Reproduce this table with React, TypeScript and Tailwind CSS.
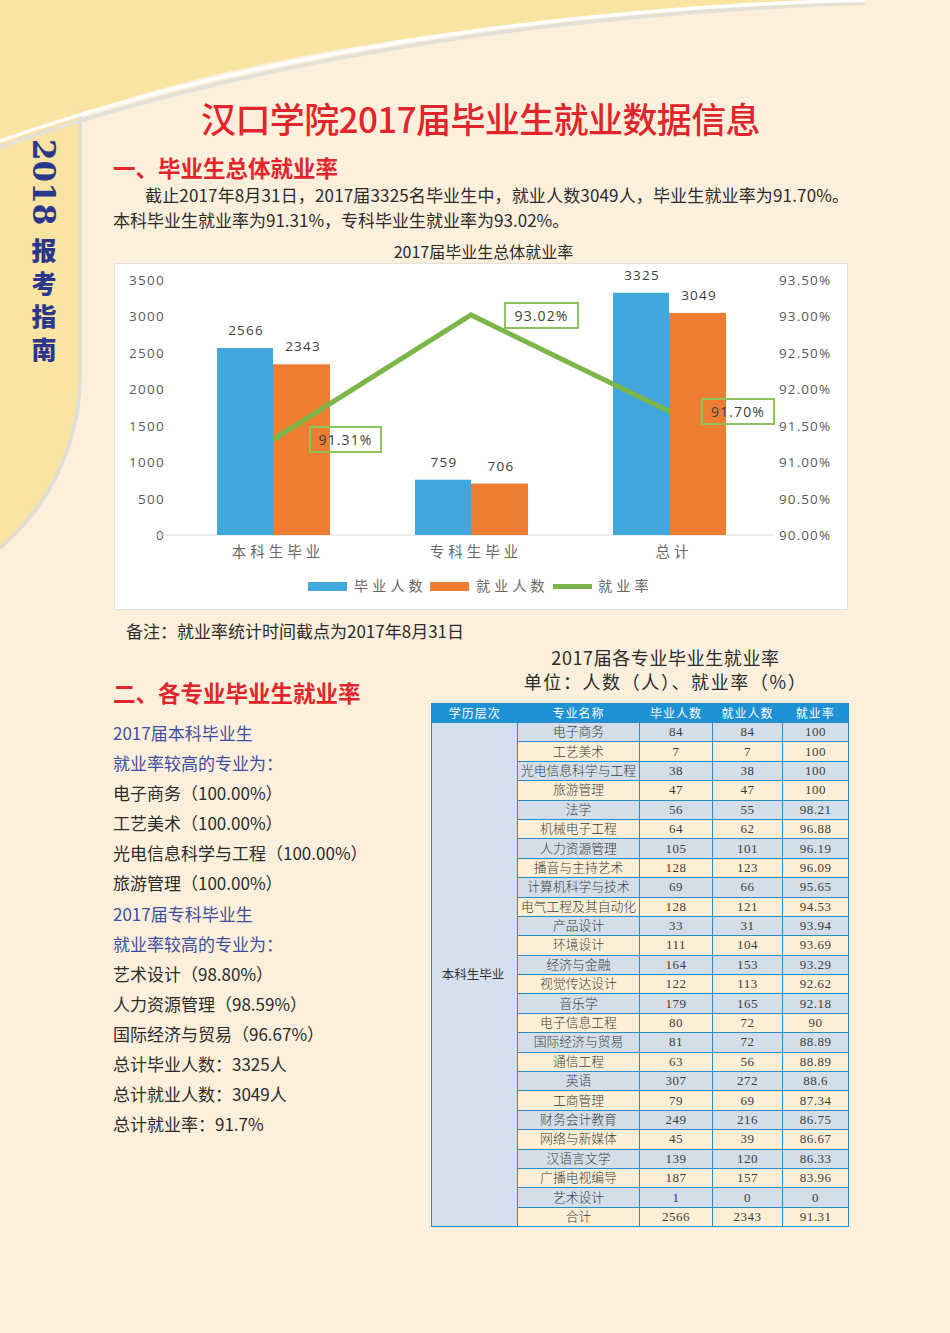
import React from 'react';

// 26 rows: 25 majors + total
const ROWS: [string, string, string, string][] = [
  ['电子商务', '84', '84', '100'],
  ['工艺美术', '7', '7', '100'],
  ['光电信息科学与工程', '38', '38', '100'],
  ['旅游管理', '47', '47', '100'],
  ['法学', '56', '55', '98.21'],
  ['机械电子工程', '64', '62', '96.88'],
  ['人力资源管理', '105', '101', '96.19'],
  ['播音与主持艺术', '128', '123', '96.09'],
  ['计算机科学与技术', '69', '66', '95.65'],
  ['电气工程及其自动化', '128', '121', '94.53'],
  ['产品设计', '33', '31', '93.94'],
  ['环境设计', '111', '104', '93.69'],
  ['经济与金融', '164', '153', '93.29'],
  ['视觉传达设计', '122', '113', '92.62'],
  ['音乐学', '179', '165', '92.18'],
  ['电子信息工程', '80', '72', '90'],
  ['国际经济与贸易', '81', '72', '88.89'],
  ['通信工程', '63', '56', '88.89'],
  ['英语', '307', '272', '88.6'],
  ['工商管理', '79', '69', '87.34'],
  ['财务会计教育', '249', '216', '86.75'],
  ['网络与新媒体', '45', '39', '86.67'],
  ['汉语言文学', '139', '120', '86.33'],
  ['广播电视编导', '187', '157', '83.96'],
  ['艺术设计', '1', '0', '0'],
  ['合计', '2566', '2343', '91.31'],
];

const LIST: { text: string; blue?: boolean }[] = [
  { text: '2017届本科毕业生', blue: true },
  { text: '就业率较高的专业为：', blue: true },
  { text: '电子商务（100.00%）' },
  { text: '工艺美术（100.00%）' },
  { text: '光电信息科学与工程（100.00%）' },
  { text: '旅游管理（100.00%）' },
  { text: '2017届专科毕业生', blue: true },
  { text: '就业率较高的专业为：', blue: true },
  { text: '艺术设计（98.80%）' },
  { text: '人力资源管理（98.59%）' },
  { text: '国际经济与贸易（96.67%）' },
  { text: '总计毕业人数：3325人' },
  { text: '总计就业人数：3049人' },
  { text: '总计就业率：91.7%' },
];

const GROUPS = [
  { label: '本科生毕业', grad: 2566, emp: 2343, rate: 91.31, x: 103, box: [196, 164, 71] },
  { label: '专科生毕业', grad: 759, emp: 706, rate: 93.02, x: 301, box: [391, 40, 73] },
  { label: '总计', grad: 3325, emp: 3049, rate: 91.7, x: 499, box: [588, 136, 72] },
];

const LEFT_TICKS = ['3500', '3000', '2500', '2000', '1500', '1000', '500', '0'];
const RIGHT_TICKS = ['93.50%', '93.00%', '92.50%', '92.00%', '91.50%', '91.00%', '90.50%', '90.00%'];

const CHART_FONT = "'Open Sans','Noto Sans CJK SC',sans-serif";

function Chart() {
  const y = (v: number) => 272 - (v * 255) / 3500;
  const yr = (r: number) => 272 - ((r - 90) * 255) / 3.5;
  const pts = GROUPS.map((g) => `${g.x + 56},${yr(g.rate)}`).join(' ');

  return (
    <div className="ml-[1px] w-[734px] h-[347px] bg-white border border-[#e4e1dc]">
      <svg width="732" height="345" viewBox="1 1 732 345" fontFamily={CHART_FONT}>
        {LEFT_TICKS.map((t, i) => (
          <text key={t} x={51} y={17 + i * 36.43 + 5} textAnchor="end" fontSize="13.5" letterSpacing="1.3" fill="#595959">
            {t}
          </text>
        ))}
        {RIGHT_TICKS.map((t, i) => (
          <text key={t} x={665} y={17 + i * 36.43 + 5} fontSize="13.5" letterSpacing="1.1" fill="#595959">
            {t}
          </text>
        ))}
        <line x1={43} y1={272} x2={659} y2={272} stroke="#d9d9d9" strokeWidth="1.2" />

        {GROUPS.map((g) => (
          <g key={g.label}>
            <rect x={g.x} y={y(g.grad)} width={56} height={272 - y(g.grad)} fill="#41a7dc" />
            <rect x={g.x + 56} y={y(g.emp)} width={57} height={272 - y(g.emp)} fill="#ed7d31" />
            <text x={g.x + 29} y={y(g.grad) - 13} textAnchor="middle" fontSize="13.5" letterSpacing="1.2" fill="#404040">
              {g.grad}
            </text>
            <text x={g.x + 86} y={y(g.emp) - 13} textAnchor="middle" fontSize="13.5" letterSpacing="1.2" fill="#404040">
              {g.emp}
            </text>
            <text x={g.x + 61} y={294} textAnchor="middle" fontSize="14.5" letterSpacing="4" fill="#666666">
              {g.label}
            </text>
          </g>
        ))}

        <polyline points={pts} fill="none" stroke="#7cb648" strokeWidth="5" strokeLinejoin="miter" />

        {GROUPS.map((g) => (
          <g key={`r-${g.label}`}>
            <rect x={g.box[0]} y={g.box[1]} width={g.box[2]} height={25} fill="none" stroke="#8cc45a" strokeWidth="2" />
            <text
              x={g.box[0] + g.box[2] / 2}
              y={g.box[1] + 18}
              textAnchor="middle"
              fontSize="14"
              letterSpacing="1.1"
              fill="#404040"
            >
              {g.rate.toFixed(2)}%
            </text>
          </g>
        ))}

        {/* legend */}
        <rect x={194} y={319} width={39} height={9} fill="#41a7dc" />
        <text x={240} y={328} fontSize="14" letterSpacing="4.2" fill="#666666">毕业人数</text>
        <rect x={316} y={319} width={39} height={9} fill="#ed7d31" />
        <text x={362} y={328} fontSize="14" letterSpacing="4.2" fill="#666666">就业人数</text>
        <line x1={439} y1={323.5} x2={478} y2={323.5} stroke="#7cb648" strokeWidth="5" />
        <text x={484} y={328} fontSize="14" letterSpacing="4.2" fill="#666666">就业率</text>
      </svg>
    </div>
  );
}

function MajorTable() {
  return (
    <table className="w-[417px] table-fixed border-collapse border-[1.5px] border-[#2a8bcb] text-[12.5px]">
      <colgroup>
        <col className="w-[86px]" />
        <col className="w-[122px]" />
        <col className="w-[73px]" />
        <col className="w-[70px]" />
        <col className="w-[66px]" />
      </colgroup>
      <thead>
        <tr className="h-[19px] bg-[#1e90d4] text-white text-[12px] tracking-[1px]">
          <th className="font-normal p-0">学历层次</th>
          <th className="font-normal p-0">专业名称</th>
          <th className="font-normal p-0">毕业人数</th>
          <th className="font-normal p-0">就业人数</th>
          <th className="font-normal p-0">就业率</th>
        </tr>
      </thead>
      <tbody className="font-['Liberation_Serif','Noto_Sans_CJK_SC',serif] text-[#3d3d3d]">
        {ROWS.map((r, i) => (
          <tr key={r[0]} className={`h-[19.4px] ${i % 2 === 0 ? 'bg-[#d3dee9]' : 'bg-[#fcefd6]'}`}>
            {i === 0 && (
              <td
                rowSpan={ROWS.length}
                className="bg-[#d4e0ec] border-[1.5px] border-[#2a8bcb] text-center font-['Noto_Sans_CJK_SC',sans-serif] text-[12.5px] text-[#333] pr-[3px]"
              >
                本科生毕业
              </td>
            )}
            {r.map((c, j) => (
              <td
                key={j}
                className={`border-[1.5px] border-[#2a8bcb] p-0 text-center leading-[16px] ${
                  j === 0 ? 'text-[12.8px] font-light' : 'text-[13px] tracking-[0.5px]'
                }`}
              >
                {c}
              </td>
            ))}
          </tr>
        ))}
      </tbody>
    </table>
  );
}

export default function App() {
  return (
    <div className="relative w-[950px] h-[1333px] overflow-hidden bg-[#fcf0dc] font-['Noto_Sans_CJK_SC',sans-serif] text-[#333]">
      {/* page decoration */}
      <svg className="absolute top-0 left-0" width="950" height="1333" viewBox="0 0 950 1333">
        <path d="M0 0 H865 C 520 8, 210 62, 80 116 L 80 380 C 78 440, 55 500, 0 548 Z" fill="#f9e5a1" />
        <path d="M80 110 L 80 380 C 78 440, 55 500, 0 548" fill="none" stroke="#e2ded6" strokeWidth="4" />
        <path d="M0 147 C 200 76, 500 14, 865 3" fill="none" stroke="#e6e1d6" strokeWidth="4" />
        <path d="M0 141 C 200 70, 500 9, 865 0" fill="none" stroke="#ffffff" strokeWidth="3.5" />
      </svg>

      <div className="relative flex">
        <aside className="w-[80px] shrink-0 pt-[139px] flex flex-col items-center text-[#2a388c]">
          <span className="[writing-mode:vertical-rl] font-['DejaVu_Serif',serif] font-bold text-[31px] leading-none ml-[6px]">
            2018
          </span>
          <div className="mt-[8px] ml-[8px] flex flex-col items-center font-black text-[25px] leading-[33px]">
            <span>报</span>
            <span>考</span>
            <span>指</span>
            <span>南</span>
          </div>
        </aside>

        <main className="ml-[33px] w-[735px] pt-[96px]">
          <h1 className="text-center text-[35px] leading-[44px] font-medium text-[#e0262c] tracking-[-0.6px]">
            汉口学院2017届毕业生就业数据信息
          </h1>

          <h2 className="mt-[12px] text-[22.5px] leading-[30px] font-bold text-[#e0262c]">一、毕业生总体就业率</h2>
          <p className="text-[17px] leading-[25px] text-[#2b2b2b] whitespace-nowrap">
            <span className="pl-[32px] tracking-[0.15px]">截止2017年8月31日，2017届3325名毕业生中，就业人数3049人，毕业生就业率为91.70%。</span>
            <br />
            本科毕业生就业率为91.31%，专科毕业生就业率为93.02%。
          </p>

          <div className="mt-[8px] text-center text-[16px] leading-[22px] text-[#2b2b2b] pl-[6px]">2017届毕业生总体就业率</div>
          <div className="mt-[1px]">
            <Chart />
          </div>

          <div className="mt-[9px] pl-[13px] text-[17px] leading-[24px] text-[#2b2b2b]">备注：就业率统计时间截点为2017年8月31日</div>

          <div className="grid grid-cols-[318px_417px]">
            <div className="pt-[34px]">
              <h2 className="text-[22.5px] leading-[30px] font-bold text-[#e0262c]">二、各专业毕业生就业率</h2>
              <ul className="mt-[11px] text-[17px] leading-[30.1px]">
                {LIST.map((l, i) => (
                  <li key={i} className={l.blue ? 'text-[#3f4ea1]' : 'text-[#2b2b2b]'}>
                    {l.text}
                  </li>
                ))}
              </ul>
            </div>

            <div className="pt-[2px]">
              <div className="pl-[52px] text-center text-[18px] leading-[24px] text-[#2b2b2b]">
                <div className="tracking-[0.6px]">2017届各专业毕业生就业率</div>
                <div className="tracking-[1.6px]">单位：人数（人）、就业率（%）</div>
              </div>
              <div className="mt-[10px]">
                <MajorTable />
              </div>
            </div>
          </div>
        </main>
      </div>
    </div>
  );
}
